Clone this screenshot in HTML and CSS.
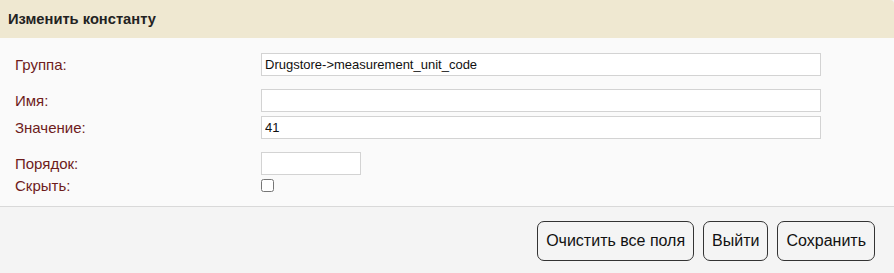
FILE: index.html
```html
<!DOCTYPE html>
<html lang="ru">
<head>
    <meta charset="UTF-8">
    <title>Изменить константу</title>
    <link rel="stylesheet" href="styles.css">
</head>
<body>
    <div class="dialog">
        <div class="dialog-title">Изменить константу</div>

        <div class="dialog-body">
            <!-- group -->
            <div class="field-group">
                <div class="field">
                    <label for="group">Группа:</label>
                    <input type="text" id="group" class="wide" value="Drugstore-&gt;measurement_unit_code">
                </div>
            </div>

            <!-- name / value -->
            <div class="field-group">
                <div class="field">
                    <label for="name">Имя:</label>
                    <input type="text" id="name" class="wide" value="">
                </div>
                <div class="field">
                    <label for="value">Значение:</label>
                    <input type="text" id="value" class="wide" value="41">
                </div>
            </div>

            <!-- order / hidden -->
            <div class="field-group">
                <div class="field">
                    <label for="order">Порядок:</label>
                    <input type="text" id="order" class="short" value="">
                </div>
                <div class="field field-check">
                    <label for="hidden">Скрыть:</label>
                    <input type="checkbox" id="hidden">
                </div>
            </div>
        </div>

        <div class="dialog-footer">
            <button type="button">Очистить все поля</button>
            <button type="button">Выйти</button>
            <button type="submit">Сохранить</button>
        </div>
    </div>
</body>
</html>
```

FILE: styles.css
```css
html, body {
    margin: 0;
    padding: 0;
    background-color: #f4f4f4;
    font-family: "Liberation Sans", Arial, sans-serif;
}

.dialog {
    width: 894px;
    height: 273px;
    display: flex;
    flex-direction: column;
}

/* Header */
.dialog-title {
    height: 38px;
    line-height: 38px;
    padding-left: 8px;
    background-color: #efe8d1;
    border-top-right-radius: 4px;
    color: #222;
    font-size: 14.7px;
    font-weight: bold;
}

/* Body */
.dialog-body {
    background-color: #fafafa;
    padding: 15px 0 14px 15px;
    border-bottom: 1px solid #d9d9d9;
    display: flex;
    flex-direction: column;
    gap: 13px;
}

.field-group {
    display: flex;
    flex-direction: column;
    gap: 4px;
}

.field {
    display: flex;
    align-items: center;
}

.field label {
    width: 246px;
    color: #6e1c1c;
    font-size: 15px;
}

.field input[type="text"] {
    box-sizing: border-box;
    height: 23px;
    margin: 0;
    padding: 0 3px;
    border: 1px solid #d3d3d3;
    background: #fff;
    color: #111;
    font-family: "Liberation Sans", Arial, sans-serif;
    font-size: 13px;
    outline: none;
}

.field input.wide {
    width: 560px;
}

.field input.short {
    width: 100px;
}

.field-check {
    height: 13px;
}

.field-check input {
    width: 13px;
    height: 13px;
    margin: 0;
}

/* Footer */
.dialog-footer {
    flex: 1;
    display: flex;
    justify-content: flex-end;
    align-items: flex-start;
    gap: 9px;
    padding: 14px 19px 0 0;
}

.dialog-footer button {
    height: 40px;
    padding: 0 8px;
    border: 1px solid #333;
    border-radius: 7px;
    background: #f4f4f4;
    color: #111;
    font-family: "Liberation Sans", Arial, sans-serif;
    font-size: 16px;
    cursor: pointer;
}
```
